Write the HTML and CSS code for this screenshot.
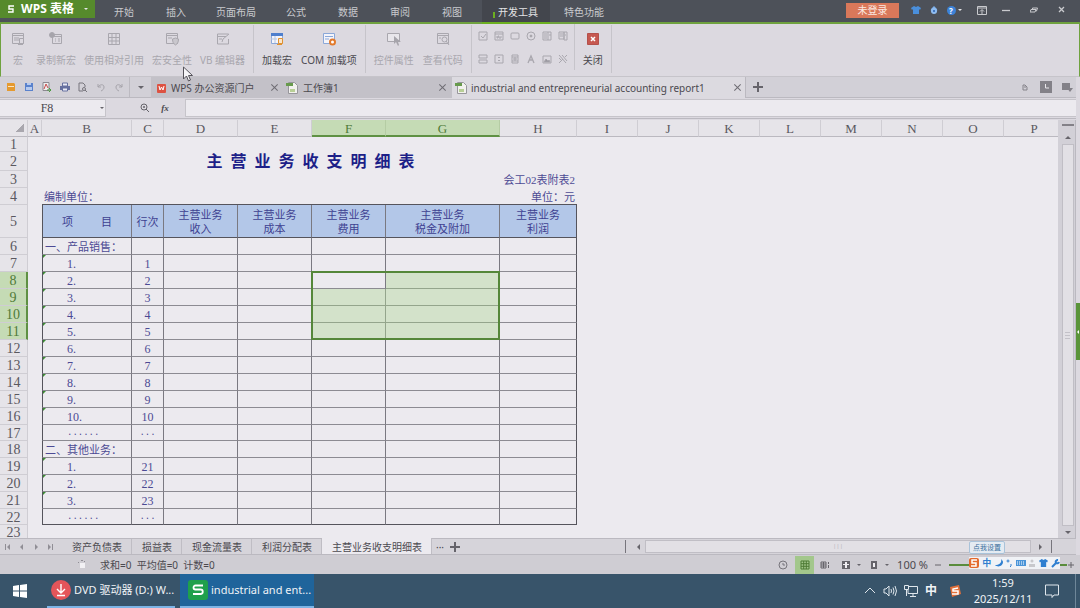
FILE: index.html
```html
<!DOCTYPE html>
<html lang="zh-CN">

<head>
  <meta charset="UTF-8" />
  <meta name="viewport" content="width=device-width, initial-scale=1.0" />
  <title>WPS 表格</title>
  <link rel="stylesheet" href="styles.css">
</head>

<body>
  <!-- 标题栏 -->
  <header class="titlebar">
    <button class="logo">
      <svg width="8" height="8" viewBox="0 0 8 8"><path d="M7 1H2v3h4v3H1" fill="none" stroke="#fff" stroke-width="1.4" /></svg>
      <span>WPS 表格</span>
      <i class="caret light"></i>
    </button>
    <nav class="menu">
      <button>开始</button>
      <button>插入</button>
      <button class="wide">页面布局</button>
      <button>公式</button>
      <button>数据</button>
      <button>审阅</button>
      <button>视图</button>
      <button class="wide active">开发工具</button>
      <button class="wide">特色功能</button>
    </nav>
    <div class="window-tools">
      <button class="login">未登录</button>
      <button class="tool skin" aria-label="皮肤"><svg width="10" height="10" viewBox="0 0 10 10"><path d="M3 1l2 1 2-1 3 2-1 2-1-1v5H2V4L1 5 0 3z" fill="#4a8fdc" /></svg></button>
      <button class="tool" aria-label="云服务"><svg width="10" height="10" viewBox="0 0 10 10"><path d="M5 1l2 2a3 3 0 1 1-4 0z" fill="#7fb0ea" /><circle cx="5" cy="6" r="3" fill="#8fbcf0" /><circle cx="5" cy="6" r="1" fill="#2b62b0" /></svg></button>
      <button class="tool help" aria-label="帮助"><span class="q">?</span><i class="caret light"></i></button>
      <button class="tool" aria-label="收起功能区"><svg width="10" height="10" viewBox="0 0 10 10"><path d="M.5 1.500h9v8h-9zM.5 3h9M5 9V5M3 6.500l2-2 2 2" fill="none" stroke="#c9cace" /></svg></button>
      <button class="tool win" aria-label="最小化"><svg width="8" height="8" viewBox="0 0 8 8"><path d="M0 4.500h8" stroke="#c9cace" stroke-width="1.300" /></svg></button>
      <button class="tool win" aria-label="还原"><svg width="8" height="8" viewBox="0 0 8 8"><path d="M1 3.500h5L5 6H0zM2.500 3.500v-1.500h5L6.500 5H6" fill="none" stroke="#c9cace" /></svg></button>
      <button class="tool win" aria-label="关闭"><svg width="8" height="8" viewBox="0 0 8 8"><path d="M1 1l5 5M6 1L1 6" stroke="#c9cace" stroke-width="1.300" /></svg></button>
    </div>
  </header>

  <!-- 功能区 -->
  <section class="ribbon">
    <div class="group">
      <button class="big" disabled>
        <svg width="16" height="16" viewBox="0 0 16 16"><path d="M2.500 2.500h11v10h-11zM2 4.500h12M4 7h5M4 9h5" /><path d="M9.500 7.500h4v5h-4zM8 13.500h5" fill="#dcd9e0" /></svg>
        <span>宏</span>
      </button>
      <button class="big" disabled>
        <svg width="16" height="16" viewBox="0 0 16 16"><path d="M4.500 3.500h9v9h-9zM4 5.500h10M7 8h1M10 8h2M7 10h1M10 10h2" /><circle cx="4" cy="4" r="2.500" fill="#a6a4ab" /></svg>
        <span>录制新宏</span>
      </button>
      <button class="big" disabled>
        <svg width="16" height="16" viewBox="0 0 16 16"><path d="M2.500 2.500h11v11h-11zM2 6.500h12M2 10h12M6 2v12M10 2v12" /></svg>
        <span>使用相对引用</span>
      </button>
      <button class="big" disabled>
        <svg width="16" height="16" viewBox="0 0 16 16"><path d="M2.500 2.500h11v10h-11zM2 4.500h12M4 7h4" /><path d="M8.500 8l3-1 3 1c0 3-1 5-3 6-2-1-3-3-3-6z" fill="#c9c7cd" /></svg>
        <span>宏安全性</span>
      </button>
      <button class="big" disabled>
        <svg width="16" height="16" viewBox="0 0 16 16"><path d="M13.500 8v5h-11v-10h11M2 5.500h9M4 8h3M7 11l1-3 6-5" /></svg>
        <span>VB 编辑器</span>
      </button>
    </div>
    <div class="group">
      <button class="big">
        <svg width="16" height="16" viewBox="0 0 16 16"><path d="M2.500 2.500h11v10h-11z" stroke="#8ba8d8" fill="#f4f4fa" /><path d="M2 3.500h12" stroke="#4f7fcd" stroke-width="3" /><path d="M6 5v7M2 8h6" stroke="#b7c6e2" /><path d="M9.500 7.500h4v5h-4zM8 13.500h5" stroke="#e0912f" fill="#f8e5cb" /></svg>
        <span>加载宏</span>
      </button>
      <button class="big">
        <svg width="16" height="16" viewBox="0 0 16 16"><path d="M2.500 2.500h11v10h-11z" stroke="#8ba8d8" fill="#f4f4fa" /><path d="M4 5.500h8M4 8h4" stroke="#8ba8d8" /><circle cx="11.500" cy="11" r="2.500" stroke="#e27a2c" stroke-width="2" fill="#fff" /></svg>
        <span>COM 加载项</span>
      </button>
    </div>
    <div class="group">
      <button class="big" disabled>
        <svg width="16" height="16" viewBox="0 0 16 16"><path d="M1.500 2.500h12v8h-12z" fill="#e8e6eb" /><path d="M8 5v8l2-2 2 4 1-1-1-3h3z" fill="#a6a4ab" stroke="none" /></svg>
        <span>控件属性</span>
      </button>
      <button class="big" disabled>
        <svg width="16" height="16" viewBox="0 0 16 16"><path d="M2.500 2.500h11v10h-11zM2 4.500h12M4 7h2" /><circle cx="9.500" cy="8.500" r="2.500" /><path d="M11 10l3 4" /></svg>
        <span>查看代码</span>
      </button>
    </div>
    <div class="group controls">
      <button aria-label="复选框" disabled><svg width="10" height="10" viewBox="0 0 10 10"><path d="M1 1h8v8H1zM3 5l2 2 3-4" /></svg></button>
      <button aria-label="文本框" disabled><svg width="10" height="10" viewBox="0 0 10 10"><path d="M1 1h8v8H1zM1 3h8M3 5v2h1V5h1v2h2V5" /></svg></button>
      <button aria-label="命令按钮" disabled><svg width="10" height="10" viewBox="0 0 10 10"><rect x="1" y="2" width="8" height="6" rx="1" /></svg></button>
      <button aria-label="选项按钮" disabled><svg width="10" height="10" viewBox="0 0 10 10"><circle cx="5" cy="5" r="4" /><circle cx="5" cy="5" r="1" fill="#98969d" /></svg></button>
      <button aria-label="列表框" disabled><svg width="10" height="10" viewBox="0 0 10 10"><path d="M1 1h8v8H1zM2 3h3M2 5h3M2 7h3M6 1v8M7 4h2" /></svg></button>
      <button aria-label="组合框" disabled><svg width="10" height="10" viewBox="0 0 10 10"><path d="M1 1h5v7H1zM6 1h3v8H6zM2 3h3M2 5h3M7 4h1" /></svg></button>
      <button aria-label="切换按钮" disabled><svg width="10" height="10" viewBox="0 0 10 10"><path d="M1 1h8v3H1zM1 6h8v3H1z" /></svg></button>
      <button aria-label="数值调节钮" disabled><svg width="10" height="10" viewBox="0 0 10 10"><path d="M1 1h8v8H1zM4 4l1-1 1 1M4 6l1 1 1-1" /></svg></button>
      <button aria-label="滚动条" disabled><svg width="10" height="10" viewBox="0 0 10 10"><path d="M2 1h6v8H2zM2 3h6M2 7h6M3 5h4M5 3v4" /></svg></button>
      <button aria-label="标签" disabled><svg width="10" height="10" viewBox="0 0 10 10"><path d="M2 9l3-7 3 7M3 6h4" stroke-width="1.300" /></svg></button>
      <button aria-label="图像" disabled><svg width="10" height="10" viewBox="0 0 10 10"><path d="M1 2h8v7H1z" /><path d="M2 8l2-3 2 2 1-1 1 2z" fill="#98969d" /></svg></button>
      <button aria-label="其他控件" disabled><svg width="10" height="10" viewBox="0 0 10 10"><path d="M1 1l7 8M4 1l5 6M1 9l4-4M7 3l2-2M1 4l2 2" /></svg></button>
    </div>
    <div class="group">
      <button class="big">
        <svg width="16" height="16" viewBox="0 0 16 16"><path d="M2.500 2.500h11v11h-11z" stroke="#b4504b" fill="#c65850" /><path d="M6 6l4 4M10 6l-4 4" stroke="#fff" stroke-width="1.500" /></svg>
        <span>关闭</span>
      </button>
    </div>
  </section>

  <!-- 快速访问 + 文档标签 -->
  <section class="docbar">
    <div class="quick">
      <button aria-label="打开"><svg width="10" height="10" viewBox="0 0 10 10"><path d="M1 1h7l1 1v7H1z" fill="#e59a2f" /><path d="M2 4h6v1H2z" fill="#fbe6c4" /></svg></button>
      <button aria-label="保存"><svg width="10" height="10" viewBox="0 0 10 10"><path d="M1 1h8v8H1z" fill="#5a82cc" /><path d="M2 5h6v3H2zM3 1h4v2H3z" fill="#b6caee" /></svg></button>
      <button aria-label="输出为PDF"><svg width="10" height="10" viewBox="0 0 10 10"><path d="M1 .500h6v8H1z" fill="#eee" stroke="#8b8990" /><path d="M2 7l2-5 2 4" fill="none" stroke="#c74c4c" /><path d="M5 8h4M7 6l2 2-2 2" fill="none" stroke="#4a9a3f" /></svg></button>
      <button aria-label="打印"><svg width="10" height="10" viewBox="0 0 10 10"><path d="M0 4h10v4H0z" fill="#66709f" /><path d="M2.500 1h5v3h-5zM2.500 6h5v3h-5z" fill="#e8eaf5" stroke="#66709f" /></svg></button>
      <button aria-label="打印预览"><svg width="10" height="10" viewBox="0 0 10 10"><path d="M5 9H1V1h4l2 2v2M7 8l2 2" fill="none" stroke="#77757c" /><circle cx="6" cy="7" r="1.500" fill="none" stroke="#77757c" /></svg></button>
      <button aria-label="撤销"><svg width="10" height="10" viewBox="0 0 10 10"><path d="M2 2v3h3M2 5c2-3 6-3 6 0 0 2-1 3-3 4" fill="none" stroke="#a5a3aa" /></svg></button>
      <button aria-label="恢复"><svg width="10" height="10" viewBox="0 0 10 10"><path d="M8 2v3H5M8 5C6 2 2 2 2 5c0 2 1 3 3 4" fill="none" stroke="#a5a3aa" /></svg></button>
    </div>
    <button class="quick-more" aria-label="自定义"><i class="caret"></i></button>
    <div class="doc-tabs">
      <div class="doc portal">
        <svg width="10" height="10" viewBox="0 0 10 10"><rect x="1" y="1" width="9" height="9" rx="1" fill="#dd5242" /><path d="M3 3l1 4 1.500-3L7 7l1-4" fill="none" stroke="#fff" /></svg>
        <span>WPS 办公资源门户</span>
        <button class="x" aria-label="关闭标签"></button>
      </div>
      <div class="doc book">
        <svg width="12" height="13" viewBox="0 0 12 13"><path d="M2.500 1.500h6l3 3v8h-9z" fill="#f2f1ee" stroke="#97969b" /><path d="M0 2h7v3H0z" fill="#679a4c" /><path d="M4 8h5v3H4z" fill="#b8cf96" /></svg>
        <span>工作簿1</span>
        <button class="x" aria-label="关闭标签"></button>
      </div>
      <div class="doc current">
        <svg width="12" height="13" viewBox="0 0 12 13"><path d="M2.500 1.500h6l3 3v8h-9z" fill="#f2f1ee" stroke="#97969b" /><path d="M0 2h7v3H0z" fill="#679a4c" /><path d="M4 8h5v3H4z" fill="#b8cf96" /></svg>
        <span>industrial and entrepreneurial accounting report1</span>
        <button class="x" aria-label="关闭标签"></button>
      </div>
      <button class="plus" aria-label="新建"></button>
    </div>
    <div class="doc-tools">
      <button aria-label="文档助手"><svg width="12" height="12" viewBox="0 0 12 12"><path d="M4 4h2l2 2v3H4zM5 6h2" fill="none" stroke="#85838a" /></svg></button>
      <button aria-label="历史"><svg width="12" height="12" viewBox="0 0 12 12"><path d="M0 0h12v12H0z" fill="#838188" /><path d="M5.500 3v4H9" fill="none" stroke="#e8e6ea" /></svg></button>
      <button aria-label="窗口列表"><svg width="12" height="12" viewBox="0 0 12 12"><path d="M1 2h8v7H1zM6 7h6l-3 4z" fill="#838188" /></svg></button>
    </div>
  </section>

  <!-- 编辑栏 -->
  <section class="formula">
    <div class="namebox">
      <input type="text" value="F8" aria-label="名称框">
      <i class="caret"></i>
    </div>
    <button aria-label="查找"><svg width="10" height="10" viewBox="0 0 10 10"><circle cx="4" cy="4" r="3" fill="none" stroke="#66646b" /><path d="M6 6l3 3M3 4h2M4 3v2" stroke="#66646b" /></svg></button>
    <button class="fx">fx</button>
    <input class="edit" type="text" aria-label="编辑栏">
  </section>

  <!-- 工作表 -->
  <main class="work">
    <div class="sheet">
      <table>
        <colgroup>
          <col class="w-no"><col class="w-a"><col class="w-b"><col class="w-c"><col class="w-d"><col class="w-d"><col class="w-f"><col class="w-g"><col class="w-h">
          <col class="w-i" span="8">
        </colgroup>
        <thead>
          <tr>
            <th class="corner"></th><th>A</th><th>B</th><th>C</th><th>D</th><th>E</th><th class="on">F</th><th class="on">G</th><th>H</th><th>I</th><th>J</th><th>K</th><th>L</th><th>M</th><th>N</th><th>O</th><th>P</th>
          </tr>
        </thead>
        <tbody>
          <tr class="r1"><th>1</th><td colspan="16"></td></tr>
          <tr class="r2"><th>2</th><td></td><td class="title" colspan="7">主&ensp;营&ensp;业&ensp;务&ensp;收&ensp;支&ensp;明&ensp;细&ensp;表</td><td colspan="8"></td></tr>
          <tr><th>3</th><td></td><td class="right" colspan="7">会工02表附表2</td><td colspan="8"></td></tr>
          <tr class="r4"><th>4</th><td></td><td class="edge left" colspan="4">编制单位：</td><td class="edge right" colspan="3">单位：元</td><td colspan="8"></td></tr>
          <tr class="head"><th>5</th><td></td><td class="g first"><div class="item"><span>项</span><span>目</span></div></td><td class="g">行次</td><td class="g">主营业务<br>收入</td><td class="g">主营业务<br>成本</td><td class="g">主营业务<br>费用</td><td class="g">主营业务<br>税金及附加</td><td class="g">主营业务<br>利润</td><td colspan="8"></td></tr>
          <tr><th>6</th><td></td><td class="g first sec">一、产品销售：</td><td class="g"></td><td class="g"></td><td class="g"></td><td class="g"></td><td class="g"></td><td class="g"></td><td colspan="8"></td></tr>
          <tr><th>7</th><td></td><td class="g first flag">1.</td><td class="g num">1</td><td class="g"></td><td class="g"></td><td class="g"></td><td class="g"></td><td class="g"></td><td colspan="8"></td></tr>
          <tr><th class="on">8</th><td></td><td class="g first flag">2.</td><td class="g num">2</td><td class="g"></td><td class="g"></td><td class="g cur"><div class="range"></div></td><td class="g sel"></td><td class="g"></td><td colspan="8"></td></tr>
          <tr><th class="on">9</th><td></td><td class="g first flag">3.</td><td class="g num">3</td><td class="g"></td><td class="g"></td><td class="g sel"></td><td class="g sel"></td><td class="g"></td><td colspan="8"></td></tr>
          <tr><th class="on">10</th><td></td><td class="g first flag">4.</td><td class="g num">4</td><td class="g"></td><td class="g"></td><td class="g sel"></td><td class="g sel"></td><td class="g"></td><td colspan="8"></td></tr>
          <tr><th class="on">11</th><td></td><td class="g first flag">5.</td><td class="g num">5</td><td class="g"></td><td class="g"></td><td class="g sel"></td><td class="g sel"></td><td class="g"></td><td colspan="8"></td></tr>
          <tr><th>12</th><td></td><td class="g first flag">6.</td><td class="g num">6</td><td class="g"></td><td class="g"></td><td class="g"></td><td class="g"></td><td class="g"></td><td colspan="8"></td></tr>
          <tr><th>13</th><td></td><td class="g first flag">7.</td><td class="g num">7</td><td class="g"></td><td class="g"></td><td class="g"></td><td class="g"></td><td class="g"></td><td colspan="8"></td></tr>
          <tr><th>14</th><td></td><td class="g first flag">8.</td><td class="g num">8</td><td class="g"></td><td class="g"></td><td class="g"></td><td class="g"></td><td class="g"></td><td colspan="8"></td></tr>
          <tr><th>15</th><td></td><td class="g first flag">9.</td><td class="g num">9</td><td class="g"></td><td class="g"></td><td class="g"></td><td class="g"></td><td class="g"></td><td colspan="8"></td></tr>
          <tr><th>16</th><td></td><td class="g first flag">10.</td><td class="g num">10</td><td class="g"></td><td class="g"></td><td class="g"></td><td class="g"></td><td class="g"></td><td colspan="8"></td></tr>
          <tr class="dots"><th>17</th><td></td><td class="g first">......</td><td class="g">...</td><td class="g"></td><td class="g"></td><td class="g"></td><td class="g"></td><td class="g"></td><td colspan="8"></td></tr>
          <tr><th>18</th><td></td><td class="g first sec">二、其他业务：</td><td class="g"></td><td class="g"></td><td class="g"></td><td class="g"></td><td class="g"></td><td class="g"></td><td colspan="8"></td></tr>
          <tr><th>19</th><td></td><td class="g first flag">1.</td><td class="g num">21</td><td class="g"></td><td class="g"></td><td class="g"></td><td class="g"></td><td class="g"></td><td colspan="8"></td></tr>
          <tr><th>20</th><td></td><td class="g first flag">2.</td><td class="g num">22</td><td class="g"></td><td class="g"></td><td class="g"></td><td class="g"></td><td class="g"></td><td colspan="8"></td></tr>
          <tr><th>21</th><td></td><td class="g first flag">3.</td><td class="g num">23</td><td class="g"></td><td class="g"></td><td class="g"></td><td class="g"></td><td class="g"></td><td colspan="8"></td></tr>
          <tr class="dots end"><th>22</th><td></td><td class="g first">......</td><td class="g">...</td><td class="g"></td><td class="g"></td><td class="g"></td><td class="g"></td><td class="g"></td><td colspan="8"></td></tr>
          <tr class="last"><th>23</th><td colspan="16"></td></tr>
        </tbody>
      </table>
    </div>
    <div class="vscroll">
      <i class="split"></i>
      <i class="caret up"></i>
      <div class="thumb"><i class="grip"></i></div>
      <i class="caret"></i>
    </div>
    <button class="pane" aria-label="展开任务窗格"></button>
  </main>

  <!-- 工作表标签 -->
  <section class="sheetbar">
    <div class="turn">
      <button aria-label="第一张"><svg width="8" height="8" viewBox="0 0 8 8"><path d="M6 1v6L3 4zM1 1h1v6H1z" /></svg></button>
      <button aria-label="上一张"><svg width="8" height="8" viewBox="0 0 8 8"><path d="M5 1v6L2 4z" /></svg></button>
      <button aria-label="下一张"><svg width="8" height="8" viewBox="0 0 8 8"><path d="M3 1v6l3-3z" /></svg></button>
      <button aria-label="最后一张"><svg width="8" height="8" viewBox="0 0 8 8"><path d="M2 1v6l3-3zM6 1h1v6H6z" /></svg></button>
    </div>
    <button class="tab">资产负债表</button>
    <button class="tab">损益表</button>
    <button class="tab">现金流量表</button>
    <button class="tab">利润分配表</button>
    <button class="tab active">主营业务收支明细表</button>
    <button class="more" aria-label="更多工作表">···</button>
    <button class="plus" aria-label="新建工作表"></button>
    <div class="hscroll">
      <i class="arrow prev"></i>
      <div class="thumb"><span>|||</span></div>
      <i class="arrow next"></i>
    </div>
  </section>

  <!-- 状态栏 -->
  <footer class="status">
    <svg class="rec" width="10" height="10" viewBox="0 0 10 10"><path d="M3 3h5v5H3z" fill="#f2f1f4" /><path d="M1 2h1v1H1zM4 0h2v1H4zM7 1h1v1H7z" fill="#8f8d94" /></svg>
    <span class="sum">求和=0&nbsp; 平均值=0&nbsp; 计数=0</span>
    <div class="views">
      <button aria-label="历史"><svg width="10" height="10" viewBox="0 0 10 10"><circle cx="5" cy="5" r="4" fill="none" stroke="#77757c" /><path d="M5 3v2h2" fill="none" stroke="#77757c" /></svg></button>
      <button class="on" aria-label="普通视图"><svg width="10" height="10" viewBox="0 0 10 10"><path d="M1 1h8v8H1zM1 3.700h8M1 6.300h8M3.700 1v8M6.300 1v8" fill="none" stroke="#4d7a34" /></svg></button>
      <button aria-label="分页预览"><svg width="10" height="10" viewBox="0 0 10 10"><path d="M1 2h5v6H1zM1 4h5M1 6h5M3.500 2v6M8.500 2v2M8.500 5v3" fill="none" stroke="#66646b" /></svg></button>
      <button class="drop" aria-label="页面布局"><svg width="10" height="10" viewBox="0 0 10 10"><path d="M1 1h8v8H1z" fill="#66646b" /><path d="M4 2h2v2h2v1H6v3H4V5H2V4h2z" fill="#f0eef2" /></svg><i class="caret"></i></button>
      <button class="drop" aria-label="阅读模式"><svg width="10" height="10" viewBox="0 0 10 10"><path d="M2 1h6v8H2z" fill="#66646b" /><path d="M4 3h2v4H4z" fill="#f0eef2" /></svg><i class="caret"></i></button>
      <span class="zoom">100 %</span>
      <button aria-label="缩小"><svg width="8" height="8" viewBox="0 0 8 8"><path d="M1 4h6" stroke="#66646b" /></svg></button>
      <i class="slider"></i>
      <button aria-label="放大"><svg width="8" height="8" viewBox="0 0 8 8"><path d="M1 4h6M4 1v6" stroke="#66646b" /></svg></button>
    </div>
    <!-- 输入法浮窗 -->
    <div class="ime-tip">点我设置</div>
    <div class="ime">
      <svg width="10" height="10" viewBox="0 0 10 10"><rect width="10" height="10" rx="2" fill="#e36a2d" /><path d="M8 2H3v3h4v3H2" fill="none" stroke="#fff" stroke-width="1.500" /></svg>
      <b>中</b>
      <svg width="8" height="8" viewBox="0 0 8 8"><path d="M6 0c1 3-1 6-6 6 3 3 8 1 8-3 0-1-1-2-2-3z" fill="#2f7fd0" /></svg>
      <svg width="7" height="8" viewBox="0 0 7 8"><circle cx="2" cy="2" r="1" fill="none" stroke="#2f7fd0" /><path d="M5 5v2L4 8" stroke="#2f7fd0" fill="none" /></svg>
      <svg width="10" height="8" viewBox="0 0 10 8"><path d="M0 1h10v6H0z" fill="#4a94d8" /><path d="M1 3h8M1 5h8" stroke="#fff" stroke-dasharray="1 1" /></svg>
      <svg width="6" height="8" viewBox="0 0 6 8"><circle cx="3" cy="2" r="1.500" fill="#c8c8cc" /><path d="M0 8V5h6v3z" fill="#c8c8cc" /></svg>
      <svg width="9" height="8" viewBox="0 0 10 9"><path d="M3 0l2 1 2-1 3 2-1 2-1-1v6H2V3L1 4 0 2z" fill="#2f7fd0" /></svg>
      <svg width="9" height="9" viewBox="0 0 9 9"><path d="M1 8l4-4M5 4a2 2 0 0 1 2-3M5 4a2 2 0 0 0 3-1" fill="none" stroke="#2f7fd0" stroke-width="2" /></svg>
    </div>
  </footer>

  <!-- 任务栏 -->
  <footer class="taskbar">
    <button class="start" aria-label="开始"><svg width="14" height="14" viewBox="0 0 14 14"><path d="M0 2l6-1v5.500H0zM7 1l7-1v6.500H7zM0 7.500h6V13l-6-1zM7 7.500h7V14l-7-1z" fill="#fff" /></svg></button>
    <button class="task">
      <svg width="20" height="20" viewBox="0 0 20 20"><circle cx="10" cy="10" r="10" fill="#e4555a" /><path d="M10 4v9M6 9l4 4 4-4M6 15.500h8" fill="none" stroke="#fff" stroke-width="1.400" /></svg>
      <span>DVD 驱动器 (D:) W...</span>
    </button>
    <button class="task active">
      <svg width="20" height="20" viewBox="0 0 20 20"><rect width="20" height="20" rx="3" fill="#1fa04b" /><path d="M15 5.500H7.500a2 2 0 0 0 0 4h5a2 2 0 0 1 0 4.500H5" fill="none" stroke="#fff" stroke-width="1.800" /></svg>
      <span>industrial and ent...</span>
    </button>
    <div class="tray">
      <svg width="12" height="14" viewBox="0 0 12 14"><path d="M1 9l5-5 5 5" fill="none" stroke="#dfe6ec" /></svg>
      <svg width="14" height="14" viewBox="0 0 14 14"><path d="M1 5h2l3-3v10L3 9H1zM8 5q1 2 0 4M10 3.500q2 3.500 0 7M12 2q3 5 0 10" fill="none" stroke="#dfe6ec" /></svg>
      <svg width="14" height="14" viewBox="0 0 14 14"><path d="M5 2.500h8.500v7H4V6M9 10v2.500M6 12.500h6M.5 1.500h4v4h-4zM2.500 5v7" fill="none" stroke="#dfe6ec" /></svg>
      <b>中</b>
      <svg class="sogou" width="12" height="12" viewBox="0 0 12 12"><path d="M1 2l9-2 2 9-9 3z" fill="#e2703a" /><path d="M9 3L4 4v2l5 0v3H3" fill="none" stroke="#fff" stroke-width="1.500" /></svg>
      <div class="clock"><span>1:59</span><span>2025/12/11</span></div>
      <svg width="14" height="14" viewBox="0 0 14 14"><path d="M.5 1h13v10H9l-2 2.500V11H.500z" fill="none" stroke="#dfe6ec" /></svg>
      <i class="desk"></i>
    </div>
  </footer>

  <svg class="cursor" width="10" height="16" viewBox="0 0 10 16"><path d="M.5 1v12l3-3 2 5 2-1-2-4.500h4z" fill="#f6f5f8" stroke="#55535a" /></svg>
</body>

</html>
```

FILE: styles.css
```css
* {
  box-sizing: border-box;
}

body {
  position: relative;
  display: flex;
  flex-direction: column;
  height: 100vh;
  margin: 0;
  overflow: hidden;
  background-color: #dcd9e0;
  color: #4b494f;
  font: 10px/14px "Noto Sans", "Noto Sans CJK SC", sans-serif;
}

button,
input {
  margin: 0;
  padding: 0;
  border: 0;
  background: none;
  color: inherit;
  font: inherit;
}

button {
  display: flex;
  align-items: center;
  justify-content: center;
  white-space: nowrap;
}

svg {
  display: block;
  flex: none;
}

.caret {
  flex: none;
  border: 3px solid transparent;
  border-top-color: #66646b;
  border-bottom: 0;
}

.caret.light {
  border-width: 2px;
  border-top-color: #e6e6e8;
  border-bottom: 0;
}

.caret.up {
  border-top: 0;
  border-bottom: 3px solid #66646b;
}

/* 标题栏 */
.titlebar {
  display: flex;
  flex: none;
  height: 24px;
  border-bottom: 2px solid #6fa23f;
  background-color: #4d5159;
  color: #c9cace;
}

.logo {
  width: 95px;
  height: 18px;
  gap: 6px;
  background-color: #568a2c;
  color: #fff;
  font-size: 12px;
  font-weight: bold;
}

.logo .caret {
  margin-left: 4px;
}

.menu {
  display: flex;
  margin-left: 3px;
}

.menu button {
  height: 24px;
  padding: 0 16px;
}

.menu .wide {
  padding: 0 14px;
}

.menu .active {
  position: relative;
  margin-left: 4px;
  padding: 2px 12px 0 16px;
  border-bottom: 2px solid #6cb020;
  background-color: #43464d;
  color: #e4e4e6;
}

.menu .active::before {
  position: absolute;
  left: 11px;
  top: 12px;
  width: 2px;
  height: 6px;
  background-color: #6cb020;
  content: "";
}

.window-tools {
  display: flex;
  align-items: center;
  height: 20px;
  margin-left: auto;
  padding-right: 9px;
}

.login {
  width: 53px;
  height: 15px;
  margin-right: 12px;
  background-color: #d9785a;
  color: #fbe9e2;
}

.tool {
  width: 18px;
  height: 18px;
}

.tool.skin {
  width: 10px;
  margin-right: 4px;
}

.tool.help {
  width: 22px;
  margin-right: 8px;
  gap: 2px;
}

.tool.win {
  margin-left: 10px;
}

.tool.win:nth-last-child(3) {
  margin-left: 6px;
}

.q {
  width: 9px;
  height: 9px;
  border-radius: 5px;
  background-color: #3c82d8;
  color: #fff;
  font-size: 8px;
  line-height: 9px;
  font-weight: bold;
}

/* 功能区 */
.ribbon {
  display: flex;
  flex: none;
  height: 53px;
  border-right: 1px solid #6fa23f;
  border-bottom: 1px solid #c6c4ca;
  border-left: 1px solid #6fa23f;
}

.group {
  display: flex;
  align-items: center;
  height: 48px;
  margin-top: 1px;
  padding: 0 4px;
  border-right: 1px solid #c6c4ca;
}

.group:first-child {
  padding-left: 3px;
}

.big {
  flex-direction: column;
  min-width: 28px;
  padding: 0 4px;
  gap: 6px;
}

.big:disabled {
  color: #a9a7ae;
}

.group:nth-child(2),
.group:nth-child(3) {
  gap: 1px;
}

.ribbon svg {
  fill: none;
  stroke: #a9a7ae;
}

.controls {
  display: grid;
  grid-template-columns: repeat(6, 16px);
  grid-template-rows: 23px 23px;
  align-content: start;
  height: 46px;
  margin-top: 0;
  padding: 0 3px;
}

/* 文档标签 */
.docbar {
  display: flex;
  flex: none;
  height: 21px;
  margin-right: 4px;
  border-bottom: 1px solid #bbb9c0;
  background-color: #d2d0d7;
}

.quick {
  display: flex;
  width: 130px;
  padding-left: 2px;
  border-right: 1px solid #bcbac1;
}

.quick button {
  width: 18px;
}

.quick-more {
  width: 21px;
}

.doc-tabs {
  display: flex;
  flex: 1;
  min-width: 0;
}

.doc {
  display: flex;
  align-items: center;
  height: 21px;
  padding: 0 6px 0 5px;
  background-color: #c3c1c8;
  white-space: nowrap;
}

.doc span {
  flex: 1;
  margin-left: 5px;
}

.portal {
  width: 134px;
}

.book {
  width: 167px;
  padding: 0 5px 0 1px;
}

.current {
  width: 294px;
  padding: 0 3px;
  border-right: 1px solid #bbb9c0;
  background-color: #dcdae0;
}

.current span {
  margin-left: 4px;
}

.x,
.plus {
  position: relative;
  flex: none;
  width: 9px;
  height: 9px;
  background: linear-gradient(#6d6b72, #6d6b72) center / 9px 1px no-repeat, linear-gradient(#6d6b72, #6d6b72) center / 1px 9px no-repeat;
}

.x {
  transform: rotate(45deg);
}

.plus {
  align-self: center;
  width: 10px;
  height: 10px;
  margin-left: 7px;
  background: linear-gradient(#66646b, #66646b) center / 10px 2px no-repeat, linear-gradient(#66646b, #66646b) center / 2px 10px no-repeat;
}

.doc-tools {
  display: flex;
  align-items: center;
  gap: 9px;
  padding-right: 3px;
}

/* 编辑栏 */
.formula {
  display: flex;
  flex: none;
  align-items: center;
  height: 21px;
  margin-right: 4px;
  border-bottom: 1px solid #bbb9c0;
}

.formula button {
  width: 20px;
}

.namebox {
  display: flex;
  align-items: center;
  width: 106px;
  height: 18px;
  margin-right: 29px;
  padding-right: 1px;
  border: 1px solid #c6c4ca;
  border-left: 0;
  background-color: #eceaef;
}

.namebox input {
  flex: 1;
  min-width: 0;
  padding-right: 6px;
  font: 12px/16px "Liberation Serif", serif;
  text-align: center;
}

.namebox .caret {
  border-width: 2px;
  border-bottom: 0;
}

.formula .fx {
  font: italic bold 9px/12px "Liberation Serif", serif;
}

.edit {
  flex: 1;
  height: 18px;
  margin-left: 10px;
  border: 1px solid #c6c4ca;
  border-right: 0;
  background-color: #eceaef;
}

/* 工作表 */
.work {
  position: relative;
  display: flex;
  flex: 1;
  min-height: 0;
  padding-top: 1px;
  padding-right: 4px;
}

.sheet {
  flex: 1;
  min-width: 0;
  overflow: hidden;
  background-color: #eceaef;
}

.sheet table {
  width: 1064px;
  border-spacing: 0;
  table-layout: fixed;
  color: #4c4a94;
  font: 11px/14px "Liberation Serif", "Noto Sans CJK SC", serif;
}

.w-no { width: 28px; }
.w-a { width: 14px; }
.w-b { width: 90px; }
.w-c { width: 32px; }
.w-d { width: 74px; }
.w-f { width: 74px; }
.w-g { width: 114px; }
.w-h { width: 77px; }
.w-i { width: 61px; }

.sheet tr {
  height: 17px;
}

.sheet .r1 {
  height: 15px;
}

.sheet .r2 {
  height: 19px;
}

.sheet .head {
  height: 33px;
}

.sheet .dots {
  height: 16px;
}

.sheet .last {
  height: 14px;
}

.sheet td,
.sheet th {
  padding: 0;
  text-align: center;
  white-space: nowrap;
}

.sheet td {
  padding-top: 1px;
}

.sheet th {
  padding-top: 1px;
  border-right: 1px solid #cfcdd3;
  border-bottom: 1px solid #cfcdd3;
  background-color: #e6e4e9;
  color: #5a585f;
  font-size: 14px;
  line-height: 13px;
  font-weight: normal;
}

.sheet thead th {
  border-bottom-color: #bbb9c0;
  font-size: 13px;
}

.sheet .last th {
  padding-top: 0;
  border-bottom: 0;
}

.sheet th.on {
  background-color: #c5dbb5;
  color: #4f7a38;
}

.sheet thead .on {
  border-right-color: #b5cca4;
  border-bottom: 2px solid #5f9143;
}

.sheet tbody .on {
  border-right: 2px solid #5f9143;
}

.corner {
  background-image: linear-gradient(135deg, transparent 50%, #a9a7ae 50%);
  background-position: 16px 4px;
  background-size: 8px 8px;
  background-repeat: no-repeat;
}

.sheet .title {
  padding: 0 0 0 2px;
  color: #1d1f88;
  font-size: 16px;
  line-height: 18px;
  font-weight: bold;
}

.sheet .right {
  padding-right: 2px;
  text-align: right;
}

.sheet .left {
  padding-left: 2px;
  text-align: left;
}

.sheet .edge {
  border-bottom: 1px solid #55545c;
}

.sheet .g {
  position: relative;
  border-right: 1px solid #7a7981;
  border-bottom: 1px solid #8c8b92;
}

.sheet .g:nth-last-child(2) {
  border-right-color: #55545c;
}

.sheet .first {
  padding-left: 24px;
  border-left: 1px solid #55545c;
  text-align: left;
}

.sheet .sec {
  padding-left: 2px;
}

.sheet .flag,
.sheet .num {
  font-size: 12px;
}

.sheet .head .g {
  padding: 1px 0 0;
  border-bottom-color: #55545c;
  background-color: #b3c7e8;
  color: #3e4191;
}

.sheet .dots .g {
  font: 9px/12px "Liberation Mono", monospace;
}

.sheet .end .g {
  border-bottom-color: #55545c;
}

.item {
  display: flex;
  justify-content: space-between;
  padding: 0 19px;
}

.flag::before {
  position: absolute;
  left: 0;
  top: 0;
  border-top: 3px solid #3b8a33;
  border-right: 3px solid transparent;
  content: "";
}

.sheet .sel {
  border-color: #94a58c;
  background-color: #d3e2ca;
}

/* 选区边框，盖住 F8:G11 */
.range {
  position: absolute;
  left: -1px;
  top: -1px;
  z-index: 1;
  width: 189px;
  height: 69px;
  border: 2px solid #55873a;
}

.vscroll {
  display: flex;
  flex-direction: column;
  align-items: center;
  width: 18px;
  padding: 4px 2px 4px 4px;
  border-right: 1px solid #bbb9c0;
  background-color: #d2d0d7;
}

.split {
  width: 12px;
  height: 2px;
  margin-bottom: 10px;
  background-color: #838188;
}

.vscroll .thumb {
  display: flex;
  flex: 1;
  align-items: center;
  justify-content: center;
  width: 12px;
  margin: 5px 0;
  border: 1px solid #c0bec5;
  background-color: #e2e0e5;
}

.grip {
  width: 5px;
  height: 7px;
  background: repeating-linear-gradient(#c3c1c8 0 1px, transparent 1px 3px);
}

.pane {
  position: absolute;
  right: 0;
  top: 184px;
  width: 4px;
  height: 57px;
  background-color: #5a9439;
}

.pane::before {
  border: 2px solid transparent;
  border-right-color: #fff;
  border-left: 0;
  content: "";
}

/* 工作表标签 */
.sheetbar {
  display: flex;
  flex: none;
  height: 17px;
  margin-right: 4px;
  border-top: 1px solid #bbb9c0;
  border-bottom: 1px solid #bbb9c0;
  background-color: #d6d4da;
}

.turn {
  display: flex;
  width: 62px;
  padding-left: 1px;
  fill: #908e95;
}

.turn button {
  width: 14px;
}

.tab {
  padding: 1px 9px 0 10px;
  border-right: 1px solid #bfbdc4;
}

.tab.active {
  margin-top: -1px;
  padding-top: 2px;
  background-color: #eceaef;
}

.more {
  width: 16px;
}

.sheetbar .plus {
  margin-left: 2px;
}

.hscroll {
  display: flex;
  align-items: center;
  width: 427px;
  height: 13px;
  margin: 1px 24px 0 auto;
  border-right: 1px solid #77757c;
  border-left: 1px solid #77757c;
}

.hscroll .thumb {
  flex: 1;
  height: 13px;
  margin: 0 8px 0 5px;
  border: 1px solid #c0bec5;
  background-color: #e2e0e5;
  color: #b5b3ba;
  font-size: 6px;
  line-height: 11px;
  text-align: center;
}

.arrow {
  border: 3px solid transparent;
}

.prev {
  margin-left: 11px;
  border-right-color: #66646b;
  border-left: 0;
}

.next {
  margin-right: 9px;
  border-left-color: #66646b;
  border-right: 0;
}

/* 状态栏 */
.status {
  position: relative;
  display: flex;
  flex: none;
  align-items: center;
  height: 19px;
  background-color: #cfcdd3;
}

.rec {
  margin-left: 77px;
}

.sum {
  margin-left: 13px;
}

.views {
  display: flex;
  align-items: center;
  height: 19px;
  margin-left: auto;
  padding-right: 5px;
}

.views button {
  height: 18px;
  min-width: 8px;
  margin-right: 11px;
  gap: 6px;
}

.views .drop {
  margin-right: 8px;
}

.views .caret {
  border-width: 2px;
  border-bottom: 0;
}

.views .on {
  width: 19px;
  margin: 0 6px 0 -4px;
  background-color: #a3c78c;
}

.zoom {
  margin-right: 6px;
  font-size: 11px;
}

.slider {
  width: 118px;
  height: 2px;
  margin-left: -4px;
  background-color: #5a8c3c;
}

.views button:last-child {
  margin: 0;
}

.ime-tip {
  position: absolute;
  right: 75px;
  top: -14px;
  height: 13px;
  padding: 0 3px;
  border: 1px solid #a9c3da;
  border-radius: 2px;
  background-color: #e4ebf2;
  color: #3a6f9c;
  font-size: 7px;
  line-height: 11px;
}

.ime {
  position: absolute;
  right: 20px;
  top: 2px;
  display: flex;
  align-items: center;
  justify-content: space-between;
  width: 91px;
  height: 12px;
  background-color: #f0f2f6;
  color: #2f7fd0;
  font-size: 9px;
  line-height: 10px;
}

/* 任务栏 */
.taskbar {
  display: flex;
  flex: none;
  height: 34px;
  background-color: #38546a;
  color: #f0f3f6;
  font-size: 11px;
}

.start {
  width: 40px;
}

.task {
  justify-content: flex-start;
  width: 128px;
  margin-left: 7px;
  padding-left: 4px;
  gap: 3px;
  border-bottom: 2px solid #7cb4e6;
}

.task.active {
  width: 134px;
  margin-left: 5px;
  padding-left: 8px;
  background-color: #1f649b;
}

.tray {
  display: flex;
  align-items: center;
  gap: 7px;
  margin-left: auto;
}

.tray b {
  font-size: 12px;
  font-weight: bold;
}

.sogou {
  margin-left: 5px;
}

.clock {
  display: flex;
  flex-direction: column;
  width: 70px;
  line-height: 16px;
  text-align: center;
}

.desk {
  width: 5px;
  height: 34px;
  margin-left: 9px;
  border-left: 1px solid #6f8799;
}

.cursor {
  position: absolute;
  left: 183px;
  top: 66px;
}
```
